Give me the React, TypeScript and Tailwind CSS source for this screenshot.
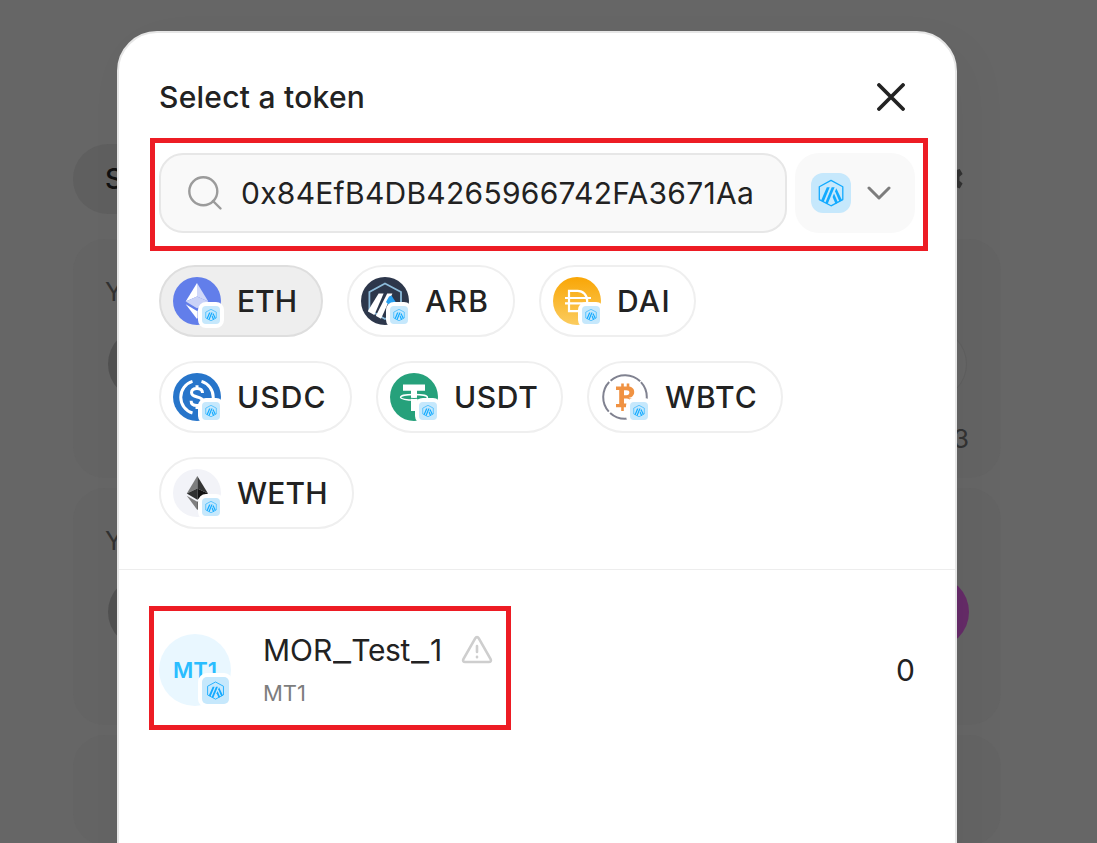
import React from "react";

function ArbitrumGlyph({ className }: { className: string }) {
  return (
    <svg viewBox="0 0 40 40" className={className} fill="none">
      <path d="M20 7.4 31.8 13.7V26.6L20 32.8 8.3 26.6V13.7Z" stroke="#12aaff" strokeWidth="1.3" strokeLinejoin="round" />
      <path d="M15.8 14.3h2.9L12.6 29l-2.5-1.5Z" fill="#12aaff" />
      <path d="M20.7 14.3h2.9L16.6 31l-2.3-1.2Z" fill="#12aaff" />
      <path d="m24 18.2 1.3-2.9 5.6 11.8-2.5 1.5Z" fill="#12aaff" />
      <path d="m23 20.6 4 8.9-2.4 1.4-3-7Z" fill="#12aaff" />
    </svg>
  );
}

function Badge() {
  return (
    <span className="absolute top-[25px] left-[25px] flex size-[26px] rounded-[8px] border-4 border-white bg-white">
      <span className="size-[18px] rounded-[4px] bg-[#c6e8fc]">
        <ArbitrumGlyph className="size-[18px]" />
      </span>
    </span>
  );
}

function EthIcon() {
  return (
    <svg viewBox="0 0 48 48" className="size-12">
      <circle cx="24" cy="24" r="24" fill="#627eea" />
      <path d="M24 6v13.4l11.3 5.1Z" fill="#fff" fillOpacity=".7" />
      <path d="M24 6 12.7 24.5 24 19.4Z" fill="#fff" />
      <path d="M24 19.4 12.7 24.5 24 31.2l11.3-6.7Z" fill="#c9d2f7" />
      <path d="M12.7 27.2 24 42V33.9Z" fill="#fff" />
      <path d="M24 33.9V42l11.3-14.8Z" fill="#c9d2f7" />
    </svg>
  );
}

function ArbIcon() {
  return (
    <svg viewBox="0 0 48 48" className="size-12" fill="none">
      <defs>
        <clipPath id="arb-hex"><path d="M7 13.5 24 4l17 9.5v21L24 44 7 34.5Z" /></clipPath>
      </defs>
      <circle cx="24" cy="24" r="24" fill="#2d374b" />
      <path d="M24 6.5 40 15v18l-16 9-15.6-9V15Z" stroke="#8bbad9" strokeWidth="1.8" />
      <g clipPath="url(#arb-hex)">
        <path d="M17.6 16.5h5L12.5 40 6 35.5Z" fill="#fff" />
        <path d="M26.2 16.5h5.2L19 44l-5.5-2.5Z" fill="#fff" />
        <path d="m28 19.5 2.5-1 9.5 15-4.5 2.5L25 25Z" fill="#28a0f0" />
      </g>
    </svg>
  );
}

function DaiIcon() {
  return (
    <svg viewBox="0 0 48 48" className="size-12" fill="none">
      <defs>
        <linearGradient id="dai-fill" x1="0" y1="0" x2="0" y2="1">
          <stop stopColor="#f9a606" />
          <stop offset="1" stopColor="#fbcc5f" />
        </linearGradient>
      </defs>
      <circle cx="24" cy="24" r="24" fill="url(#dai-fill)" />
      <path d="M16 13.8h8.5c5.7 0 9.7 4.2 9.7 10.2s-4 10.2-9.7 10.2H16Z M12 21h26M12 26.4h26" stroke="#fff" strokeWidth="2.2" />
    </svg>
  );
}

function UsdcIcon() {
  return (
    <svg viewBox="0 0 48 48" className="size-12" fill="none" stroke="#fff" strokeWidth="3">
      <circle cx="24" cy="24" r="24" fill="#2775ca" stroke="none" />
      <path d="M19.5 8.4a16.5 16.5 0 0 0 0 31.6M28.5 8.4a16.5 16.5 0 0 1 0 31.6" />
      <path d="M29.5 20c0-3-2-4.6-5.5-4.6s-5.5 1.5-5.5 4.2c0 6.2 11.3 2.6 11.3 8.6 0 2.8-2.3 4.3-5.8 4.3s-5.9-1.6-5.9-4.8M24 12.3v3.4M24 32v4" />
    </svg>
  );
}

function UsdtIcon() {
  return (
    <svg viewBox="0 0 48 48" className="size-12">
      <circle cx="24" cy="24" r="24" fill="#26a17b" />
      <path d="M13 11.5h22v6.2h-8V38h-6V17.7h-8Z" fill="#fff" />
      <ellipse cx="24" cy="24.3" rx="13.5" ry="2.8" fill="none" stroke="#fff" strokeWidth="1.3" />
      <path d="M21 25.3c2 .3 4 .3 6 0" fill="none" stroke="#26a17b" strokeWidth="1" />
    </svg>
  );
}

function WbtcIcon() {
  return (
    <svg viewBox="0 0 48 48" className="size-12" fill="none">
      <circle cx="24" cy="24" r="24" fill="#fff" />
      <circle cx="24" cy="24" r="21.8" stroke="#808290" strokeWidth="2" strokeDasharray="32.2 2.04" transform="rotate(-43 24 24)" />
      <path d="M21.5 10.5v5M27 10.5v5M21.5 32v6M27 32v6" stroke="#f09242" strokeWidth="2.6" />
      <path d="M15 13.6h11.6c4.2 0 6.6 1.9 6.6 5.4 0 3.9-2.9 6-7.2 6 3.8.2 7.6.8 7.6 3.9 0 3.6-2.6 5.3-6.8 5.3H15v-3.3h3.2V16.9H15Zm8 3.6v5h2.4c2 0 3-.9 3-2.6 0-1.6-1-2.4-3-2.4Zm0 8.4v5h2.8c2 0 3.1-.8 3.1-2.5 0-1.6-1.1-2.5-3.1-2.5Z" fill="#f09242" fillRule="evenodd" />
    </svg>
  );
}

function WethIcon() {
  return (
    <svg viewBox="0 0 48 48" className="size-12">
      <circle cx="24" cy="24" r="24" fill="#f2f3f8" />
      <path d="M24.3 7v12.5L35 24.5Z" fill="#343535" />
      <path d="M24.3 7 13.8 24.5l10.5-5Z" fill="#7d7e7e" />
      <path d="M24.3 19.5v11.3L35 24.5Z" fill="#131313" />
      <path d="m13.8 24.5 10.5 6.3V19.5Z" fill="#2f3030" />
      <path d="M13.8 26.7 24.3 41v-8.3Z" fill="#808080" />
      <path d="M24.3 32.7V41L35 26.7Z" fill="#3c3c3b" />
    </svg>
  );
}

const tokens = [
  { name: "ETH", icon: EthIcon, box: "w-[164px] border-[#dedede] bg-[#eeeeee]", text: "tracking-[0px]" },
  { name: "ARB", icon: ArbIcon, box: "w-[168px] border-[#efefef] bg-white", text: "tracking-[1.3px]" },
  { name: "DAI", icon: DaiIcon, box: "w-[157px] border-[#efefef] bg-white", text: "tracking-[1.3px]" },
  { name: "USDC", icon: UsdcIcon, box: "w-[193px] border-[#efefef] bg-white", text: "tracking-[1.1px]" },
  { name: "USDT", icon: UsdtIcon, box: "w-[187px] border-[#efefef] bg-white", text: "tracking-[0.6px]" },
  { name: "WBTC", icon: WbtcIcon, box: "w-[196px] border-[#efefef] bg-white", text: "tracking-[1px]" },
  { name: "WETH", icon: WethIcon, box: "w-[195px] border-[#efefef] bg-white", text: "tracking-[0.2px]" },
];

function SwapPage() {
  return (
    <div className="flex h-full w-full flex-col pt-36 pr-24 pl-[73px] text-[28px] text-[#323232]">
      <div className="flex h-[70px] shrink-0 items-center justify-between">
        <div className="flex h-full w-40 items-center rounded-full bg-[#5f5f5f] pl-8 font-medium text-[#111]">Swap</div>
        <svg viewBox="0 0 24 24" className="mr-[35px] size-[34px]" fill="#323232">
          <path d="m10 2-.7 3-2 .9-2.9-1-2 3.5 2.2 2v2.8l-2.2 2 2 3.5 2.9-1 2 .9.7 3h4l.7-3 2-.9 2.9 1 2-3.5-2.2-2v-2.8l2.2-2-2-3.5-2.9 1-2-.9-.7-3Z" />
        </svg>
      </div>
      <div className="mt-[25px] flex h-[239px] w-[928px] shrink-0 flex-col rounded-[32px] bg-[#646464] pt-[33px] pr-8 pl-8">
        <div className="text-[26px] leading-10">You pay</div>
        <div className="mt-4 flex h-[72px] shrink-0 justify-between pr-0.5 pl-[3px]">
          <div className="w-36 rounded-full bg-[#515151]" />
          <div className="w-44 rounded-full border border-[#5f5f5f] bg-[#666666]" />
        </div>
        <div className="mt-[19px] text-right text-[26px] leading-10">Balance: 3</div>
      </div>
      <div className="mt-[10px] flex h-[237px] w-[928px] shrink-0 flex-col rounded-[32px] bg-[#646464] pt-[33px] pr-8 pl-8">
        <div className="text-[26px] leading-10">You receive</div>
        <div className="mt-[15px] flex h-[72px] shrink-0 justify-between pl-[3px]">
          <div className="w-36 rounded-full bg-[#515151]" />
          <div className="w-60 rounded-full bg-[#652b68]" />
        </div>
      </div>
      <div className="mt-[10px] h-[110px] w-[928px] shrink-0 rounded-[32px] bg-[#646464]" />
    </div>
  );
}

export default function App() {
  return (
    <main className="relative h-[843px] w-[1097px] overflow-hidden bg-[#666666] font-['Inter',sans-serif] text-[#222222]">
      <SwapPage />
      <section className="absolute top-[31px] left-[117px] flex h-[860px] w-[840px] flex-col rounded-[40px] border-2 border-[#e6e6e6] bg-white shadow-[12px_16px_50px_rgba(0,0,0,0.04)]">
        <header className="flex h-[120px] shrink-0 items-center justify-between pt-[8px] pr-[50px] pl-10">
          <h1 className="text-[30px] leading-10 font-medium tracking-[0.25px] whitespace-nowrap">Select a token</h1>
          <svg viewBox="0 0 28 28" className="size-7" fill="none" stroke="#222222" strokeWidth="3.8" strokeLinecap="round">
            <path d="m2 2 24 24M26 2 2 26" />
          </svg>
        </header>
        <div className="relative flex h-20 shrink-0 gap-2 px-10">
          <div className="flex w-[628px] items-center rounded-[24px] border-2 border-[#e7e7e7] bg-[#f9f9f9] pl-[26px]">
            <svg viewBox="0 0 36 36" className="size-9 shrink-0" fill="none" stroke="#9b9b9b" strokeWidth="2.4">
              <circle cx="16.3" cy="16.3" r="14" />
              <path d="m26 26 7.5 7.5" strokeLinecap="round" />
            </svg>
            <span className="ml-[18px] text-[30px] leading-10 tracking-[0.27px] whitespace-nowrap">0x84EfB4DB4265966742FA3671Aa</span>
          </div>
          <div className="flex w-[120px] items-center rounded-[24px] bg-[#f9f9f9] pl-4">
            <span className="size-10 rounded-[12px] bg-[#c6e8fc]">
              <ArbitrumGlyph className="size-10" />
            </span>
            <svg viewBox="0 0 24 16" className="ml-4 h-4 w-6" fill="none" stroke="#7d7d7d" strokeWidth="3" strokeLinecap="round" strokeLinejoin="round">
              <path d="m2 3 10 10L22 3" />
            </svg>
          </div>
          <div className="pointer-events-none absolute top-[-15px] left-[31px] h-[113px] w-[778px] border-[5px] border-[#ed1c24]" />
        </div>
        <div className="mt-8 flex shrink-0 flex-wrap gap-6 pr-20 pl-10">
          {tokens.map(({ name, icon: Icon, box, text }) => (
            <button key={name} className={`flex h-[72px] shrink-0 items-center rounded-full border-2 pl-3 ${box}`}>
              <span className="relative size-12 shrink-0">
                <Icon />
                <Badge />
              </span>
              <span className={`ml-4 text-[30px] leading-10 font-medium ${text}`}>{name}</span>
            </button>
          ))}
        </div>
        <div className="mt-10 h-px shrink-0 bg-[#ededed]" />
        <div className="relative mt-16 flex h-[72px] shrink-0 items-center pr-10 pl-10">
          <span className="relative flex size-[72px] shrink-0 items-center justify-center rounded-full bg-[#e9f7ff] text-[22px] font-semibold text-[#2abdff]">
            MT1
            <span className="absolute top-[39px] left-[39px] size-[35px] rounded-[9px] border-4 border-white bg-white">
              <span className="block size-[27px] rounded-[5px] bg-[#c6e8fc]">
                <ArbitrumGlyph className="size-[27px]" />
              </span>
            </span>
          </span>
          <div className="ml-8 flex w-[230px] flex-col">
            <div className="flex h-[42px] items-center justify-between">
              <span className="text-[30px] leading-10 whitespace-nowrap">
                MOR<span className="ml-px inline-block w-[18px] origin-left scale-x-[1.32]">_</span>
                <span className="tracking-[-0.4px]">Test</span>
                <span className="ml-px inline-block w-[19px] origin-left scale-x-[1.32]">_</span>1
              </span>
              <svg viewBox="0 0 32 30" className="h-[30px] w-8 shrink-0" fill="none" stroke="#cecece" strokeWidth="2.6" strokeLinecap="round" strokeLinejoin="round">
                <path d="M14.2 3.3 2.4 24.2c-.9 1.6 0 2.8 1.8 2.8h23.6c1.8 0 2.7-1.2 1.8-2.8L17.8 3.3c-.9-1.6-2.7-1.6-3.6 0ZM16 11v6M16 21.8v.4" />
              </svg>
            </div>
            <span className="mt-[4px] text-[22px] leading-9 text-[#7d7d7d]">MT1</span>
          </div>
          <span className="ml-auto text-[30px] leading-10">0</span>
          <div className="pointer-events-none absolute top-[-28px] left-[30px] h-[124px] w-[362px] border-[5px] border-[#ed1c24]" />
        </div>
      </section>
    </main>
  );
}
